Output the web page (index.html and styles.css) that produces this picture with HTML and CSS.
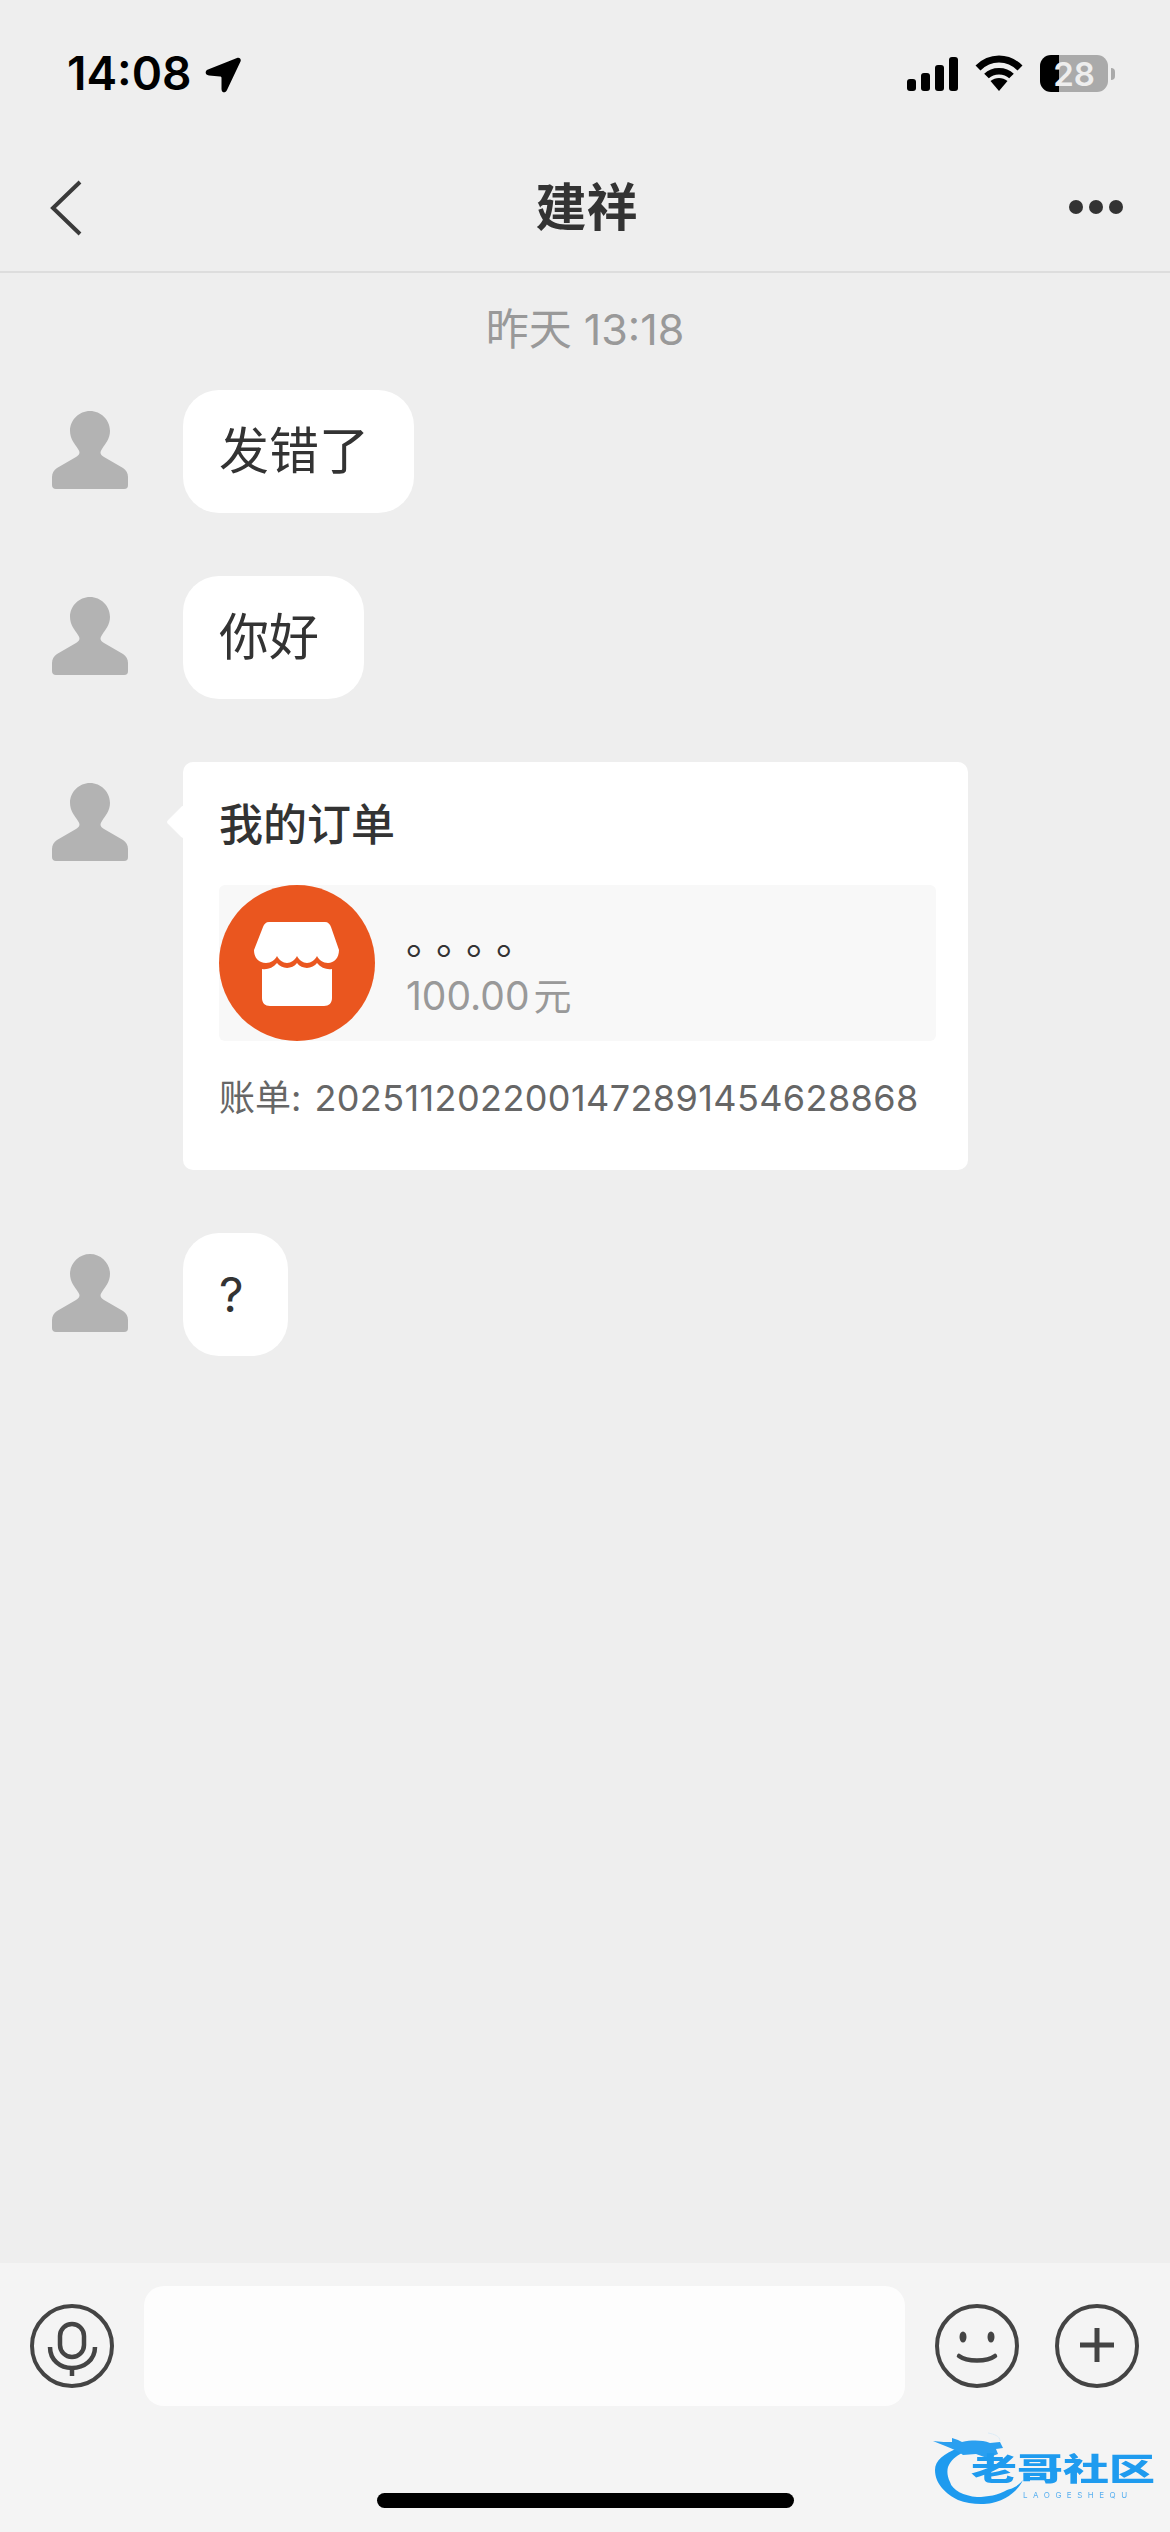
FILE: index.html
```html
<!DOCTYPE html>
<html lang="zh-CN">
<head>
    <meta charset="UTF-8">
    <meta name="viewport" content="width=device-width, initial-scale=1">
    <title>建祥</title>
    <link rel="stylesheet" href="styles.css">
</head>
<body>
    <div class="phone">
        <div class="status-bar">
            <div class="status-left">
                <span class="clock">14:08</span>
                <svg class="loc-arrow" width="36" height="36" viewBox="0 0 36 36"><path d="M32 1 C34.500 0 36.500 2 35.500 4.500 L22 33 C20.500 36.500 16.500 36 16.500 32 L16.500 21 C16.500 20 16 19.500 15 19.500 L4 18.500 C0 18 -0.500 14 3 12.500 Z" fill="#000"/></svg>
            </div>
            <div class="status-right">
                <div class="signal">
                    <i class="bar1"></i><i class="bar2"></i><i class="bar3"></i><i class="bar4"></i>
                </div>
                <svg class="wifi" width="48" height="36" viewBox="0 0 48 36">
                    <path d="M3 13 C15 1 33 1 45 13" fill="none" stroke="#000" stroke-width="7"/>
                    <path d="M11.500 21 C18 14.500 30 14.500 36.500 21" fill="none" stroke="#000" stroke-width="6.500"/>
                    <path d="M15.500 26 C20.500 22 27.500 22 32.500 26 L24 36 Z" fill="#000"/>
                </svg>
                <div class="battery">
                    <span class="battery-num">28</span>
                </div>
                <div class="battery-nub"></div>
            </div>
        </div>

        <div class="nav">
            <svg class="nav-back" width="32" height="56" viewBox="0 0 32 56"><path d="M30 2 L3 28 L30 54" fill="none" stroke="#3a3a3a" stroke-width="4"/></svg>
            <div class="nav-title">建祥</div>
            <div class="nav-more"><i></i><i></i><i></i></div>
        </div>

        <div class="chat">
            <div class="time">昨天 13:18</div>

            <div class="msg">
                <svg class="avatar" viewBox="0 0 76 78"><use href="#person"/></svg>
                <div class="bubble">发错了</div>
            </div>
            <div class="msg">
                <svg class="avatar" viewBox="0 0 76 78"><use href="#person"/></svg>
                <div class="bubble">你好</div>
            </div>
            <div class="msg">
                <svg class="avatar" viewBox="0 0 76 78"><use href="#person"/></svg>
                <div class="card">
                    <div class="card-title">我的订单</div>
                    <div class="order">
                        <svg class="store" width="156" height="156" viewBox="0 0 156 156">
                            <circle cx="78" cy="78" r="78" fill="#ea561f"/>
                            <path d="M50 37 H106 C109 37 111 39 112 42 L120 65 C120 73 115 78 109 78 C104 78 100 75 98 71 C96 75 92 78 88 78 C84 78 80 75 78 71 C76 75 72 78 68 78 C64 78 60 75 58 71 C56 75 52 78 47 78 C40 78 35 73 35 65 L44 42 C45 39 47 37 50 37 Z" fill="#fff"/>
                            <path d="M43 84 C48 85 54 83 58 78 C62 84 73 85 78 78 C83 85 94 84 98 78 C102 83 108 85 113 84 V113 C113 118 110 121 105 121 H51 C46 121 43 118 43 113 Z" fill="#fff"/>
                        </svg>
                        <div class="order-info">
                            <div class="order-name">。。。。</div>
                            <div class="order-price">100.00<span class="yuan">元</span></div>
                        </div>
                    </div>
                    <div class="bill"><span class="bill-label">账单:</span><span class="bill-no">2025112022001472891454628868</span></div>
                </div>
            </div>
            <div class="msg">
                <svg class="avatar" viewBox="0 0 76 78"><use href="#person"/></svg>
                <div class="bubble bubble-short">?</div>
            </div>
        </div>

        <div class="composer">
            <svg class="tool tool-mic" width="84" height="84" viewBox="0 0 84 84">
                <circle cx="42" cy="42" r="40" fill="none" stroke="#444" stroke-width="4"/>
                <rect x="30" y="20" width="24" height="33" rx="12" fill="none" stroke="#444" stroke-width="4.500"/>
                <path d="M20 43 C20 56 30 64 42 64 C54 64 65 56 65 43" fill="none" stroke="#444" stroke-width="4.500"/>
                <path d="M42 64 V72" stroke="#444" stroke-width="4.500"/>
            </svg>
            <div class="input"></div>
            <svg class="tool tool-smile" width="84" height="84" viewBox="0 0 84 84">
                <circle cx="42" cy="42" r="40" fill="none" stroke="#444" stroke-width="4"/>
                <ellipse cx="28" cy="33" rx="3.500" ry="5.500" fill="#444"/>
                <ellipse cx="56" cy="33" rx="3.500" ry="5.500" fill="#444"/>
                <path d="M24 52 C32 58 52 58 60 52" fill="none" stroke="#444" stroke-width="4.500" stroke-linecap="round"/>
            </svg>
            <svg class="tool tool-plus" width="84" height="84" viewBox="0 0 84 84">
                <circle cx="42" cy="42" r="40" fill="none" stroke="#444" stroke-width="4"/>
                <path d="M42 24 V58 M25 41 H59" stroke="#444" stroke-width="5"/>
            </svg>
        </div>

        <div class="home-bar"></div>

        <div class="watermark">
            <svg class="wm-dragon" width="100" height="74" viewBox="0 0 100 74">
                <path d="M26 16 C12 22 3 28 3 38 C3 52 14 62 26 68 C36 72 50 73 60 71 C74 68 85 60 91 48 C86 54 82 56 75 58 C66 63 56 65 45 65 C32 64 20 58 18 50 C15 44 15 39 16 35 C19 28 24 24 30 21 Z" fill="#1e9bef"/>
                <path d="M1 9 C8 10 16 10 20 10 L20 6 L26 8 L30 10 C40 8 50 8 58 11 L68 10 L71 16 L64 17 L66 22 L55 26 L44 22 L31 23 C26 18 12 14 1 9 Z" fill="#2a9ff0"/>
                <path d="M56 1 C62 2 68 4 68 9" fill="none" stroke="#dcebf6" stroke-width="1"/>
            </svg>
            <div class="wm-name">老哥社区</div>
            <div class="wm-sub">LAOGESHEQU</div>
        </div>
    </div>

    <svg class="defs" width="0" height="0">
        <defs>
            <path id="person" d="M38 0 C49 0 58 9 58 20 C58 28 53 33 50 38 C47 42 49 44 52 46 L71 57 C74 59 76 62 76 66 L76 74 C76 76.500 75 78 72 78 L4 78 C1.500 78 0 76.500 0 74 L0 66 C0 62 2 59 5 57 L24 46 C27 44 29 42 26 38 C23 33 18 28 18 20 C18 9 27 0 38 0 Z" fill="#b3b3b3"/>
        </defs>
    </svg>
</body>
</html>
```

FILE: styles.css
```css
* {
    box-sizing: border-box;
}

body {
    margin: 0;
    padding: 0;
    background-color: #eee;
    color: #333;
    font-family: "Inter", "Noto Sans CJK SC", sans-serif;
}

.defs {
    position: absolute;
}

.phone {
    position: relative;
    width: 1170px;
    height: 2532px;
    display: flex;
    flex-direction: column;
    background-color: #eee;
    overflow: hidden;
}

/* status bar */
.status-bar {
    height: 148px;
    flex: none;
    display: flex;
    justify-content: space-between;
    padding: 55px 55px 0 67px;
}

.status-left {
    display: flex;
    align-items: flex-start;
    gap: 13px;
}

.clock {
    font-size: 46px;
    line-height: 37px;
    font-weight: 600;
    color: #000;
}

.loc-arrow {
    margin-top: 2px;
}

.status-right {
    display: flex;
    align-items: flex-start;
}

.signal {
    display: flex;
    align-items: flex-end;
    gap: 5px;
    height: 34px;
    margin-top: 2px;
}

.signal i {
    width: 9px;
    background-color: #000;
    border-radius: 3px;
}

.bar1 { height: 12px; }
.bar2 { height: 18px; }
.bar3 { height: 26px; }
.bar4 { height: 34px; }

.wifi {
    margin-left: 17px;
}

.battery {
    width: 68px;
    height: 37px;
    margin-left: 17px;
    border-radius: 11px;
    background: linear-gradient(to right, #000 19px, #aaa 19px);
    display: flex;
    align-items: center;
    justify-content: center;
}

.battery-num {
    font-size: 33px;
    font-weight: 600;
    color: #eee;
}

.battery-nub {
    width: 4px;
    height: 12px;
    margin: 13px 0 0 3px;
    background-color: #aaa;
    border-radius: 0 6px 6px 0;
}

/* nav */
.nav {
    height: 125px;
    flex: none;
    display: grid;
    grid-template-columns: 1fr auto 1fr;
    align-items: start;
    padding: 32px 47px 0 50px;
    border-bottom: 2px solid #ddd;
}

.nav-title {
    font-size: 51px;
    line-height: 50px;
    font-weight: 600;
    color: #333;
    margin-top: 3px;
}

.nav-more {
    display: flex;
    justify-content: flex-end;
    gap: 6px;
    margin-top: 20px;
}

.nav-more i {
    width: 14px;
    height: 14px;
    border-radius: 50%;
    background-color: #333;
}

/* chat */
.chat {
    flex: 1;
    display: flex;
    flex-direction: column;
    gap: 63px;
    padding-top: 33px;
}

.time {
    margin-bottom: -25px;
    height: 46px;
    line-height: 46px;
    text-align: center;
    font-size: 43px;
    color: #999;
}

.msg {
    display: flex;
    align-items: flex-start;
    padding-left: 52px;
}

.avatar {
    width: 76px;
    height: 78px;
    flex: none;
    margin-top: 21px;
    margin-right: 55px;
}

.bubble {
    height: 123px;
    line-height: 123px;
    padding: 0 45px 0 36px;
    background-color: #fff;
    border-radius: 36px;
    font-size: 50px;
    color: #333;
}

.bubble-short {
    padding-right: 44px;
    font-size: 48px;
}

.card {
    position: relative;
    width: 785px;
    height: 408px;
    padding: 35px 32px 0 36px;
    background-color: #fff;
    border-radius: 10px;
}

.card::before {
    content: "";
    position: absolute;
    left: -12px;
    top: 48px;
    width: 24px;
    height: 24px;
    background-color: #fff;
    transform: rotate(45deg);
    border-radius: 3px;
}

.card-title {
    position: relative;
    font-size: 44px;
    line-height: 56px;
    font-weight: 500;
    color: #333;
}

.order {
    display: flex;
    align-items: flex-start;
    height: 156px;
    margin-top: 32px;
    background-color: #f8f8f8;
    border-radius: 6px;
}

.order-info {
    margin-left: 31px;
}

.order-name {
    font-family: "Noto Sans CJK SC", sans-serif;
    font-size: 40px;
    line-height: 50px;
    letter-spacing: -10px;
    text-spacing-trim: space-all;
    color: #333;
    margin-top: 27px;
}

.order-price {
    font-size: 39px;
    line-height: 50px;
    color: #999;
    margin-top: 9px;
}

.yuan {
    margin-left: 4px;
    font-size: 38px;
}

.bill {
    margin-top: 32px;
    font-size: 36px;
    line-height: 50px;
    color: #666;
    white-space: nowrap;
}

.bill-label {
    margin-right: 13px;
}

.bill-no {
    letter-spacing: 0.400px;
}

/* composer */
.composer {
    height: 269px;
    flex: none;
    display: flex;
    align-items: flex-start;
    padding: 23px 31px 0 30px;
    background-color: #f4f4f4;
}

.tool {
    flex: none;
    margin-top: 18px;
}

.input {
    width: 763px;
    height: 120px;
    margin: 0 30px;
    background-color: #fdfdfd;
    border-radius: 20px;
}

.tool-plus {
    margin-left: 36px;
}

/* overlays */
.home-bar {
    position: absolute;
    left: 377px;
    top: 2493px;
    width: 417px;
    height: 15px;
    background-color: #000;
    border-radius: 8px;
}

.watermark {
    position: absolute;
    left: 932px;
    top: 2432px;
    width: 222px;
    height: 74px;
    color: #1e9bef;
    filter: blur(0.7px);
}

.wm-dragon {
    position: absolute;
    left: 0;
    top: 0;
}

.wm-name {
    position: absolute;
    left: 39px;
    top: 24px;
    font-family: "Noto Sans CJK SC", sans-serif;
    font-size: 46px;
    line-height: 34px;
    font-weight: 900;
    white-space: nowrap;
    transform: scaleY(0.66);
    transform-origin: left top;
}

.wm-sub {
    position: absolute;
    left: 91px;
    top: 59px;
    font-size: 8px;
    line-height: 8px;
    letter-spacing: 5.500px;
    white-space: nowrap;
    color: #5ab0f0;
}
```
